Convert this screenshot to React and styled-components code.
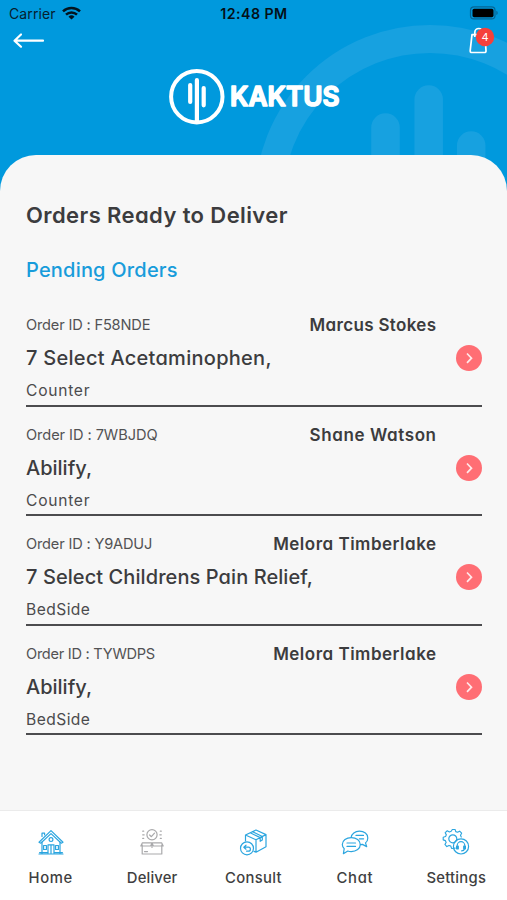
import React from "react";
import styled, { createGlobalStyle } from "styled-components";

const BLUE = "#0099dd";

const GlobalStyle = createGlobalStyle`
  * { box-sizing: border-box; }
  body {
    margin: 0;
    background: #fff;
    font-family: Inter, "Liberation Sans", sans-serif;
    font-feature-settings: "cv11";
    color: #3c3c3e;
  }
  button { font: inherit; color: inherit; border: 0; padding: 0; background: none; }
`;

const Screen = styled.main`
  width: 507px;
  height: 900px;
  display: flex;
  flex-direction: column;
  overflow: hidden;
  background: ${BLUE};
`;

const Header = styled.header`
  position: relative;
  height: 155px;
  flex: none;
`;

const Watermark = styled.svg`
  position: absolute;
  top: 0;
  right: 0;
  z-index: 0;
`;

const StatusBar = styled.div`
  position: relative;
  display: grid;
  grid-template-columns: 1fr auto 1fr;
  align-items: center;
  height: 27px;
  padding: 0 8px 0 9px;
  font-size: 14px;
  font-feature-settings: normal;
  color: #06202e;
`;

const Carrier = styled.div`
  display: flex;
  align-items: center;
  gap: 6px;
  letter-spacing: 0.1px;
`;

const WifiSlot = styled.span`
  display: flex;
  margin-top: -2px;
`;

const Clock = styled.div`
  font-weight: 600;
  font-size: 14.2px;
  letter-spacing: 0.45px;
  color: #041017;
`;

const BatterySlot = styled.div`
  display: flex;
  justify-content: flex-end;
  margin-top: -1px;
`;

const NavBar = styled.div`
  position: relative;
  display: flex;
  justify-content: space-between;
  align-items: flex-start;
  height: 28px;
  padding: 0 12px;
`;

const IconButton = styled.button`
  display: block;
  line-height: 0;
`;

const Brand = styled.div`
  position: relative;
  display: flex;
  justify-content: center;
  padding: 13px 0 0;
`;

const Sheet = styled.section`
  position: relative;
  height: 655px;
  flex: none;
  padding: 45px 25px 0 26px;
  background: #f7f7f7;
  border-radius: 36px 36px 0 0;
`;

const Title = styled.h1`
  margin: 0;
  font-size: 22px;
  line-height: 30px;
  font-weight: 600;
  letter-spacing: 0.4px;
`;

const Subtitle = styled.h2`
  margin: 28px 0 15px;
  font-size: 20px;
  line-height: 24px;
  font-weight: 500;
  color: #189cdb;
  letter-spacing: 0.2px;
`;

const OrderRow = styled.article`
  display: grid;
  grid-template-columns: 1fr auto 46px;
  grid-template-rows: 20px 26px 20px;
  row-gap: 10px;
  height: 109.6px;
  padding-top: 18.2px;
  border-bottom: 2px solid #4c4c4f;
  white-space: nowrap;
`;

const OrderId = styled.div`
  font-size: 14.6px;
  line-height: 20px;
  color: #525254;
  letter-spacing: ${(p) => p.$track || 0}px;
`;

const Customer = styled.div`
  font-size: 17px;
  line-height: 20px;
  font-weight: 600;
  letter-spacing: ${(p) => p.$track || 0}px;
  margin-right: ${(p) => -(p.$track || 0)}px;
`;

const Product = styled.div`
  grid-column: 1 / 3;
  font-size: 20px;
  line-height: 26px;
  font-weight: 500;
  letter-spacing: ${(p) => p.$track || 0}px;
`;

const Place = styled.div`
  grid-column: 1 / 4;
  font-size: 15.6px;
  line-height: 20px;
  color: #4b4b4d;
  letter-spacing: ${(p) => p.$track || 0}px;
`;

const OpenButton = styled.button`
  justify-self: end;
  width: 26px;
  height: 26px;
  border-radius: 50%;
  background: #ff6e74;
  display: grid;
  place-items: center;
`;

const TabBar = styled.nav`
  height: 90px;
  flex: none;
  display: grid;
  grid-template-columns: repeat(5, 1fr);
  background: #fff;
  border-top: 1px solid #ebebeb;
`;

const Tab = styled.button`
  display: flex;
  flex-direction: column;
  align-items: center;
  padding-top: 17px;
  color: ${(p) => (p.$active ? "#a9a9ab" : "#2ba5df")};
`;

const TabLabel = styled.span`
  margin-top: 12px;
  font-size: 14.8px;
  line-height: 20px;
  font-weight: 500;
  color: #3f3f41;
  letter-spacing: ${(p) => p.$track || 0}px;
`;

const Glyph = styled.svg`
  display: block;
  fill: none;
  stroke: currentColor;
  stroke-width: 1.2;
  stroke-linecap: round;
  stroke-linejoin: round;
`;

const orders = [
  { id: "F58NDE", idTrack: -0.17, name: "Marcus Stokes", nameTrack: 0.33, product: "7 Select Acetaminophen,", track: 0.28, place: "Counter", placeTrack: 0.75 },
  { id: "7WBJDQ", idTrack: -0.06, name: "Shane Watson", nameTrack: 0.6, product: "Abilify,", track: 0, place: "Counter", placeTrack: 0.75 },
  { id: "Y9ADUJ", idTrack: -0.17, name: "Melora Timberlake", nameTrack: 0.5, product: "7 Select Childrens Pain Relief,", track: 0.08, place: "BedSide", placeTrack: 0.45 },
  { id: "TYWDPS", idTrack: -0.27, name: "Melora Timberlake", nameTrack: 0.5, product: "Abilify,", track: 0, place: "BedSide", placeTrack: 0.45 },
];

function HomeIcon() {
  return (
    <Glyph width="28" height="28" viewBox="0 0 28 28">
      <path d="M2 14.2 14 2.6l12 11.600-1.700 1L14 5.600 3.700 15.200z" />
      <path d="M5 14v11.500M23 14v11.500M5 8.500V5.200h2.600v1.600M2 26h24M2.600 24.600h8M17.400 24.600h8" />
      <circle cx="14" cy="11.600" r="1.900" />
      <path d="M11 25.500v-8.700h6v8.700M14 17v8.500M6.600 17.500h2.800v4H6.600zM18.600 17.500h2.800v4h-2.800z" />
    </Glyph>
  );
}

function DeliverIcon() {
  return (
    <Glyph width="28" height="28" viewBox="0 0 28 28">
      <circle cx="14" cy="6.800" r="5.100" />
      <path d="m11.600 7 1.800 1.700 3.100-3.500M4.700 3.200h1M4.700 6.800h1.500M4.700 10.400h1M22.300 3.200h1M21.800 6.800h1.500M22.300 10.400h1" />
      <path d="M4.200 16.800v9.200h19.600v-9.200M2.800 18l1.600-3.200h19.200l1.600 3.200H15.400L14 15l-1.400 3zM14 15.400v4M6.500 23.600h3" />
    </Glyph>
  );
}

function ConsultIcon() {
  return (
    <Glyph width="28" height="28" viewBox="0 0 28 28">
      <path d="M6.500 13V7L17 2l10 4.600v12.200l-10 5.400-2-.8M6.500 7 17 11.800 27 6.600M17 11.800v12.400M11.200 4.800l10 4.800v3.700l2.100-1.200V8.500L13.600 3.700" />
      <circle cx="8" cy="20.300" r="6.500" />
      <path d="M7 17.200 4.800 19.200 7 21.200M5 19.200h4.400a2 2 0 0 1 0 4H7.600" />
    </Glyph>
  );
}

function ChatIcon() {
  return (
    <Glyph width="28" height="28" viewBox="0 0 28 28">
      <path d="M10.200 9.200C10.600 5.800 14 3.200 18.400 3.200c4.800 0 8.400 2.800 8.400 6.700 0 2.100-.9 3.900-2.300 5l1.200 3.700-4.300-2.200-2 .2" />
      <path d="M10.300 9.600c5 0 9 3 9 7s-4 7-9 7c-1.300 0-2.400-.2-3.500-.6L2.400 25.700l.8-5C2 19.500 1.300 18.100 1.300 16.600c0-4 4-7 9-7z" />
      <path d="M6 15h8.500M6 18.400h8.500M15 7.400h7.500M18.400 10.800h4.200" />
    </Glyph>
  );
}

function SettingsIcon() {
  return (
    <Glyph width="28" height="28" viewBox="0 0 28 28">
      <path d="M12.500 18.700l-3.800.3-.8-2.500-1.900-.7-2.300 1.200-2-2.200 1.300-2.200-.8-1.800-2.300-.8V7.200l2.500-.7.8-1.800-1.200-2.300 2.200-2 2.200 1.200 1.900-.7L9.500-1h2.900l.7 2.300 1.900.7 2.200-1.200 2.100 2.100-1.200 2.200.8 1.900" transform="translate(1.300 2.400) scale(.95)" />
      <circle cx="10.800" cy="10.800" r="4" />
      <circle cx="19" cy="18.400" r="7.600" />
      <path d="M15.200 20.500v-3a3.800 3.800 0 0 1 7.600 0v3M14.600 18.200v2.600h1.700v-2.600M21.700 18.200v2.600h1.700v-2.600M22.500 21c-.3 1.300-1.200 1.800-2.900 1.800" />
    </Glyph>
  );
}

const tabs = [
  { label: "Home", Icon: HomeIcon, track: 0.6 },
  { label: "Deliver", Icon: DeliverIcon, track: 0.15, active: true },
  { label: "Consult", Icon: ConsultIcon, track: 0.35 },
  { label: "Chat", Icon: ChatIcon, track: 0.7 },
  { label: "Settings", Icon: SettingsIcon, track: 0.25 },
];

function WifiIcon() {
  return (
    <svg width="19" height="14" viewBox="0 0 19 14" fill="none" stroke="#03141e" strokeWidth="2.500">
      <path d="M1 5.400a12.300 12.300 0 0 1 17 0" />
      <path d="M4 8.700a8 8 0 0 1 11 0" />
      <path d="M9.500 13.600 6.500 10.700a4.300 4.300 0 0 1 6 0z" fill="#03141e" stroke="none" />
    </svg>
  );
}

function BatteryIcon() {
  return (
    <svg width="30" height="14" viewBox="0 0 30 14">
      <rect x="1.500" y=".9" width="24.500" height="12" rx="3.500" fill="none" stroke="#056696" strokeWidth="1.200" />
      <rect x="3.500" y="2.800" width="21" height="8.400" rx="1.600" fill="#000" />
      <path d="M27.300 4.800c1.900.7 1.900 3.600 0 4.300z" fill="#056696" />
    </svg>
  );
}

function BackIcon() {
  return (
    <svg width="34" height="28" viewBox="0 0 34 28" fill="none" stroke="#fff" strokeWidth="2.200" strokeLinecap="round" strokeLinejoin="round">
      <path d="M31 13.700H3M9 7.500 2.500 13.700 9 19.700" />
    </svg>
  );
}

function BagIcon() {
  return (
    <svg width="28" height="28" viewBox="0 0 28 28">
      <path d="M5 7.600h13l1 16.100q.1 1.800-1.700 1.800H4.900q-1.800 0-1.700-1.800zM7.800 10V5.500a4 4 0 0 1 8 0V10" fill="none" stroke="#fff" strokeWidth="1.700" strokeLinejoin="round" />
      <circle cx="18" cy="10" r="9.200" fill="#f5403a" />
      <text x="18" y="14" textAnchor="middle" fontSize="11" fill="#fff">4</text>
    </svg>
  );
}

function Logo() {
  return (
    <svg width="172" height="58" viewBox="168 68 172 58">
      <circle cx="196.800" cy="96.700" r="25.700" fill="none" stroke="#fff" strokeWidth="4" />
      <path d="M190.200 85v17M196.900 80.200V121M203.700 88v17.300" stroke="#fff" strokeWidth="4.200" strokeLinecap="round" />
      <text x="230" y="106.300" fontSize="26.500" fontWeight="600" fill="#fff" stroke="#fff" strokeWidth="1.600" strokeLinejoin="round" textLength="109.500" lengthAdjust="spacingAndGlyphs">
        KAKTUS
      </text>
    </svg>
  );
}

export default function App() {
  return (
    <>
      <GlobalStyle />
      <Screen>
        <Header>
          <Watermark width="260" height="200" viewBox="247 0 260 200">
            <g fill="none" stroke="#17a1e0">
              <circle cx="430" cy="200" r="161" strokeWidth="28" />
              <path d="M385.500 127.500V220M428.700 99.500V220M471.200 145.500V220" strokeWidth="28.500" strokeLinecap="round" />
            </g>
          </Watermark>
          <StatusBar>
            <Carrier>Carrier <WifiSlot><WifiIcon /></WifiSlot></Carrier>
            <Clock>12:48 PM</Clock>
            <BatterySlot><BatteryIcon /></BatterySlot>
          </StatusBar>
          <NavBar>
            <IconButton aria-label="Back"><BackIcon /></IconButton>
            <IconButton aria-label="Cart"><BagIcon /></IconButton>
          </NavBar>
          <Brand><Logo /></Brand>
        </Header>
        <Sheet>
          <Title>Orders Ready to Deliver</Title>
          <Subtitle>Pending Orders</Subtitle>
          {orders.map((o) => (
            <OrderRow key={o.id}>
              <OrderId $track={o.idTrack}>Order ID : {o.id}</OrderId>
              <Customer $track={o.nameTrack}>{o.name}</Customer>
              <span />
              <Product $track={o.track}>{o.product}</Product>
              <OpenButton aria-label="Open order">
                <svg width="10" height="12" viewBox="0 0 10 12" fill="none" stroke="#ffe9ea" strokeWidth="1.700">
                  <path d="m3 1.500 4.500 4.700L3 10.900" />
                </svg>
              </OpenButton>
              <Place $track={o.placeTrack}>{o.place}</Place>
            </OrderRow>
          ))}
        </Sheet>
        <TabBar>
          {tabs.map(({ label, Icon, track, active }) => (
            <Tab key={label} $active={active}>
              <Icon />
              <TabLabel $track={track}>{label}</TabLabel>
            </Tab>
          ))}
        </TabBar>
      </Screen>
    </>
  );
}
